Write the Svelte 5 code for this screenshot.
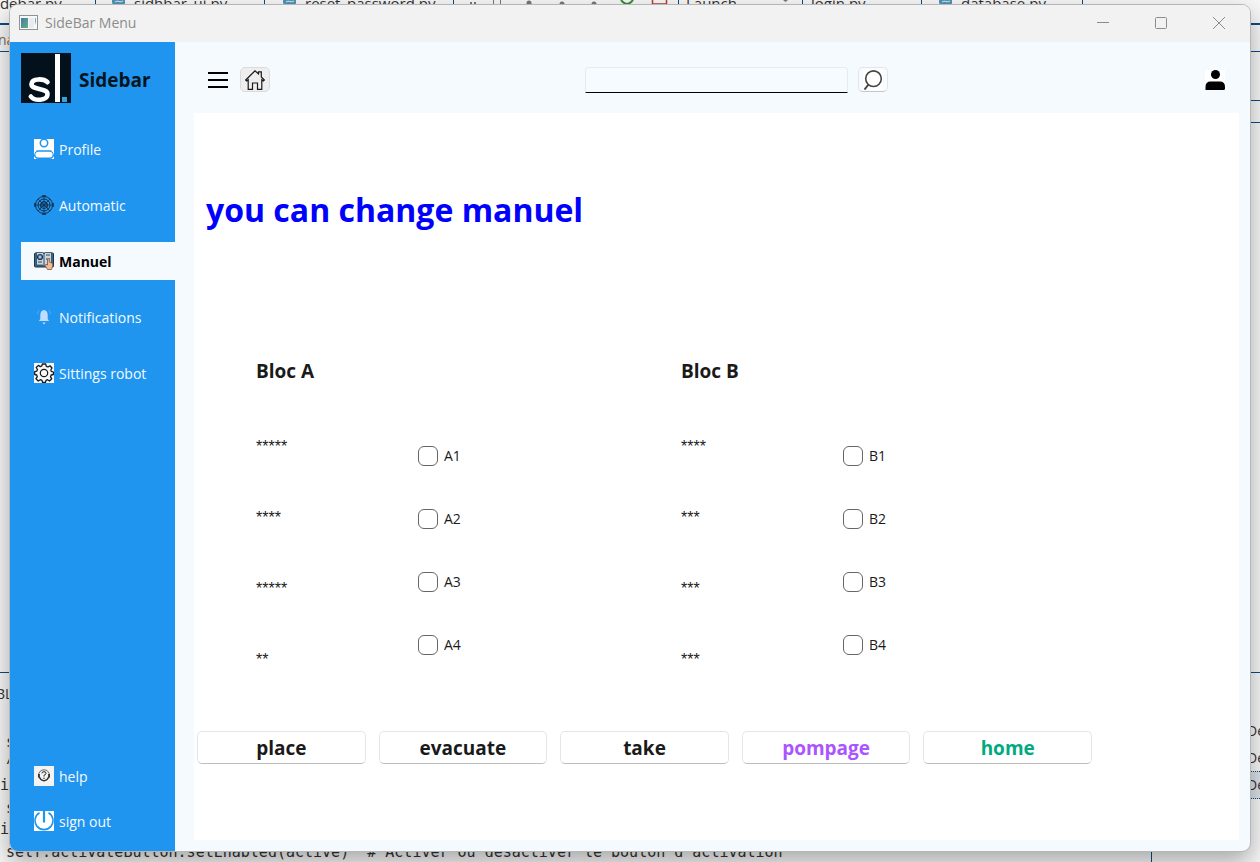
<script>
  const tabs = [
    { name: 'sidebar.py', x: -11, end: 95 },
    { name: 'sidhbar_ui.py', x: 134, end: 264, py: true },
    { name: 'reset_password.py', x: 305, end: 453, py: true },
    { name: 'Launch', x: 686, end: 678 },
    { name: 'login.py', x: 811, end: 802 },
    { name: 'database.py', x: 961, end: 1082, end2: 921, py: true }
  ];
  const rules = [
    { y: 23, thick: true },
    { y: 51 },
    { y: 672 }
  ];
  const code = [
    { text: 'na', x: -2, y: 31, ui: true, warm: true },
    { text: 'BL', x: -4, y: 685, ui: true },
    { text: 's', x: 6, y: 733 },
    { text: '/', x: 6, y: 749 },
    { text: '.il', x: -9, y: 776 },
    { text: 's', x: 6, y: 799 },
    { text: '.il', x: -9, y: 820 },
    { text: "self.activateButton.setEnabled(active)  # Activer ou désactiver le bouton d'activation", x: 6, y: 843 }
  ];
  const nav = [
    { id: 'profile', label: 'Profile' },
    { id: 'automatic', label: 'Automatic' },
    { id: 'manuel', label: 'Manuel' },
    { id: 'notifications', label: 'Notifications' },
    { id: 'settings', label: 'Sittings robot' }
  ];
  const footer = [
    { id: 'help', label: 'help' },
    { id: 'signout', label: 'sign out' }
  ];
  const blocs = [
    { name: 'Bloc A', values: ['*****', '****', '*****', '**'], checks: ['A1', 'A2', 'A3', 'A4'] },
    { name: 'Bloc B', values: ['****', '***', '***', '***'], checks: ['B1', 'B2', 'B3', 'B4'] }
  ];
  const actions = [
    { label: 'place' },
    { label: 'evacuate' },
    { label: 'take' },
    { label: 'pompage', tone: 'violet' },
    { label: 'home', tone: 'green' }
  ];
  let active = $state('manuel');
  let query = $state('');
</script>

{#snippet icon(id)}
  <svg class="icon" viewBox="0 0 20 20" aria-hidden="true">
    {#if id === 'profile'}
      <rect width="20" height="20" fill="#fff" />
      <circle cx="10" cy="4" r="3.700" fill="#fff" stroke="#2095f0" stroke-width="1.500" />
      <rect x="0.700" y="12" width="18.600" height="7.200" rx="3.500" fill="#fff" stroke="#2095f0" stroke-width="1.500" />
      <path d="M0 11.500H3Q0.500 12.500 0 16ZM20 11.500H17Q19.500 12.500 20 16Z" fill="#fff" />
    {:else if id === 'automatic'}
      <g fill="none" stroke="#12304d" stroke-width="1">
        <circle cx="10" cy="10" r="8.500" />
        <circle cx="10" cy="10" r="6" />
        <circle cx="10" cy="10" r="3.500" />
        <path d="M10 0V20M0 10H20M4 4L16 16M16 4L4 16" stroke-width="0.800" />
        <path d="M8 1H12M8 19H12M1 8V12M19 8V12" stroke-width="1.500" />
        <path d="M7 13V9L10 6L13 9V13" />
      </g>
      <circle cx="10" cy="10" r="1.500" fill="#12304d" />
    {:else if id === 'manuel'}
      <rect x="0.500" y="2" width="19" height="14" rx="1" fill="#33658d" stroke="#243447" />
      <path d="M2.500 1.500H8.500L10 3L11.500 1.500H17.500V14H11.500L10 15L8.500 14H2.500Z" fill="#c9d6e2" stroke="#34495c" stroke-width="0.800" />
      <path d="M10 3V14M4 11H8M12 8H16M12 4H16" stroke="#34495c" fill="none" />
      <circle cx="6" cy="6" r="2.500" fill="#5b9bd0" stroke="#243447" stroke-width="1.200" />
      <circle cx="6" cy="6" r="0.800" fill="#fff" />
      <path d="M13.500 8Q14.500 7 15.300 8V11L18 12Q19.300 12.500 18.700 15L17.500 18.500H13.500L11 14.500Q11.500 13 13.500 14Z" fill="#efbd94" stroke="#7c543d" stroke-width="0.800" />
    {:else if id === 'notifications'}
      <path d="M10 3Q6.500 3.500 6.300 8V12L5 14H15L13.700 12V8Q13.500 3.500 10 3Z" fill="#bfdcff" />
      <path d="M8.300 15.500H11.700L10 17.500Z" fill="#bfdcff" />
      <path d="M5 3Q3.500 4.500 3.500 7M15 3Q16.500 4.500 16.500 7" fill="none" stroke="#4eaaf5" />
    {:else if id === 'settings'}
      <rect width="20" height="20" fill="#f6f8fa" />
      <path d="M8.300 1H11.700L12.300 3.300L14 4L16 2.800L18 5L16.800 7L17.300 8.400L19.400 9V11.500L17.200 12L16.500 13.800L17.700 15.700L15.500 18L13.500 16.700L12 17.400L11.500 19.400H8.500L8 17.400L6.300 16.700L4.300 18L2 15.700L3.300 13.700L2.700 12L0.700 11.500V8.600L2.800 8.100L3.500 6.500L2.200 4.500L4.400 2.400L6.300 3.600L7.800 3Z" fill="none" stroke="#15191c" stroke-width="1.300" stroke-linejoin="round" />
      <circle cx="10" cy="10" r="3.700" fill="none" stroke="#15191c" stroke-width="1.200" />
    {:else if id === 'help'}
      <rect width="20" height="20" fill="#f3f3f3" />
      <circle cx="10" cy="9.300" r="5.500" fill="none" stroke="#666" stroke-width="1" />
      <path d="M5.500 11L7 13.500L10 14.800L13 13.500L14.500 11" fill="none" stroke="#333" stroke-width="1.200" />
      <path d="M8 7.300Q8 5.700 10 5.700Q12 5.700 12 7.300Q12 8.500 10 9.300V10.500" fill="none" stroke="#222" stroke-width="1" />
      <circle cx="10" cy="12.300" r="0.700" fill="#222" />
      <path d="M5 8V11.500M15 8V11.500" stroke="#222" stroke-width="1.600" />
    {:else if id === 'signout'}
      <rect width="20" height="20" fill="#fff" />
      <path d="M5.500 1.800A9 9 0 1 0 14.500 1.800" fill="none" stroke="#2095f0" stroke-width="1.600" />
      <path d="M10 0V11.500" stroke="#2095f0" stroke-width="2.200" />
    {/if}
  </svg>
{/snippet}

<div class="desktop">
  <div class="editor" aria-hidden="true">
    {#each tabs as tab}
      <span class="tab" style="left: {tab.x}px">{tab.name}</span>
      <i class="divider" style="left: {tab.end}px"></i>
      {#if tab.end2}<i class="divider" style="left: {tab.end2}px"></i>{/if}
      {#if tab.py}
        <svg class="py" viewBox="0 0 14 6" style="left: {tab.x - 22}px">
          <path d="M0 0H13V3Q13 5 10 5H3Q0 5 0 2Z" fill="#4f94b8" />
          <path d="M3 2Q5 0.500 7 1.500T11 1" fill="none" stroke="#dbe9f0" />
        </svg>
      {/if}
    {/each}
    <svg class="tools" viewBox="0 0 330 6">
      <g fill="#777">
        <path d="M50 2h2v2h-2zM54 2h2v2h-2zM73 0h1v4h-1zM80 0h1v4h-1z" />
        <circle cx="109" cy="3" r="2.500" /><circle cx="142" cy="4" r="2.500" /><circle cx="174" cy="4" r="2.500" />
        <path d="M363 0h5l-2.500 2z" />
      </g>
      <path d="M201 0Q207 8 213 0" fill="none" stroke="#388a34" stroke-width="2" />
      <path d="M232.500 0V4H246.500V0" fill="none" stroke="#b0412e" stroke-width="1.500" />
    </svg>
    {#each rules as rule}
      <i class="rule" class:thick={rule.thick} style="top: {rule.y}px"></i>
    {/each}
    <i class="rule side" style="top: 100px"></i>
    <i class="rule side" style="top: 122px"></i>
    {#each code as line}
      <span class="code" class:ui={line.ui} class:warm={line.warm} style="left: {line.x}px; top: {line.y}px">{line.text}</span>
    {/each}
    <div class="panel">
      <span>De</span><span>De</span><span class="picked">De</span>
    </div>
    <i class="gutter"></i>
  </div>

  <div class="window">
    <div class="titlebar">
      <svg width="19" height="15" viewBox="0 0 19 15" aria-hidden="true">
        <defs>
          <linearGradient id="scene" x1="0" y1="0" x2="1" y2="1">
            <stop offset="0" stop-color="#4478a8" /><stop offset="1" stop-color="#62b183" />
          </linearGradient>
        </defs>
        <rect x="0.500" y="0.500" width="18" height="14" fill="#f8f8f8" stroke="#929292" />
        <rect x="2" y="3" width="7" height="10" fill="url(#scene)" />
        <rect x="10" y="3" width="5" height="10" fill="#e9ecef" />
        <path d="M16 3h1v7l-1-3z" fill="#7ca7c4" />
      </svg>
      <span class="caption">SideBar Menu</span>
      <button class="chrome" aria-label="Minimize"><svg viewBox="0 0 14 14"><path d="M1 6.500H13" /></svg></button>
      <button class="chrome" aria-label="Maximize"><svg viewBox="0 0 14 14"><rect x="1.500" y="1.500" width="11" height="11" rx="1" /></svg></button>
      <button class="chrome" aria-label="Close"><svg viewBox="0 0 14 14"><path d="M1 1L13 13M13 1L1 13" /></svg></button>
    </div>

    <div class="body">
      <aside>
        <div class="brand">
          <svg width="50" height="50" viewBox="0 0 50 50" aria-hidden="true">
            <rect width="50" height="50" fill="#02111b" />
            <path d="M26.500 29.200C23 25.600 11 24.800 10.500 31C10.200 37.500 26.500 34.300 26.500 41C26.500 48.500 13 48 9.800 43.500" fill="none" stroke="#fff" stroke-width="4.600" stroke-linecap="round" />
            <rect x="34" y="1" width="5" height="48" fill="#fff" />
            <rect x="41" y="44" width="5" height="5" fill="#2fa5dc" />
          </svg>
          <strong>Sidebar</strong>
        </div>
        <nav>
          {#each nav as item}
            <button class="link" class:active={active === item.id} onclick={() => (active = item.id)}>
              {@render icon(item.id)}<span>{item.label}</span>
            </button>
          {/each}
        </nav>
        <div class="bottom">
          {#each footer as item}
            <button class="link">{@render icon(item.id)}<span>{item.label}</span></button>
          {/each}
        </div>
      </aside>

      <main>
        <header>
          <button class="bare" aria-label="Toggle menu">
            <svg width="20" height="20" viewBox="0 0 20 20"><path d="M0 3H20M0 10H20M0 17H20" stroke="#000" stroke-width="2" /></svg>
          </button>
          <button class="tool home" aria-label="Home">
            <svg width="20" height="20" viewBox="0 0 20 20" fill="none" stroke="#1a1a1a" stroke-width="1.200">
              <path d="M0.700 10L10 0.800L13.500 4V1.800H16.300V7L19.300 10L18.300 11L16.800 9.700V19.300H12.500V13H7.500V19.300H3.200V9.700L1.700 11Z" />
            </svg>
          </button>
          <div class="search">
            <input type="text" aria-label="Search" bind:value={query} />
            <button class="tool" aria-label="Run search">
              <svg width="20" height="20" viewBox="0 0 20 20">
                <rect width="20" height="20" fill="#fff" />
                <circle cx="10.500" cy="8.700" r="7.800" fill="none" stroke="#444" stroke-width="1.600" />
                <path d="M5.500 14.500L1.500 19.500" stroke="#444" stroke-width="2" />
              </svg>
            </button>
          </div>
          <button class="bare" aria-label="Account">
            <svg width="20" height="20" viewBox="0 0 20 20">
              <rect width="20" height="20" fill="#fff" />
              <circle cx="10.500" cy="4.500" r="4.500" />
              <path d="M0.500 20V17Q0.500 11.500 5.500 11.500H15Q20 11.500 20 17V18.500Q20 20 18.500 20Z" />
            </svg>
          </button>
        </header>

        <section class="page">
          <h1>you can change manuel</h1>
          <div class="blocs">
            {#each blocs as bloc}
              <div class="bloc">
                <h2>{bloc.name}</h2>
                <div class="values">
                  {#each bloc.values as value}<span>{value}</span>{/each}
                </div>
                <div class="checks">
                  {#each bloc.checks as check}
                    <label><input type="checkbox" />{check}</label>
                  {/each}
                </div>
              </div>
            {/each}
          </div>
          <div class="actions">
            {#each actions as action}
              <button class={action.tone}>{action.label}</button>
            {/each}
          </div>
        </section>
      </main>
    </div>
  </div>
</div>

<style>
  :global(body) {
    margin: 0;
  }
  .desktop {
    position: relative;
    box-sizing: border-box;
    min-height: 100vh;
    padding: 4px 9px 10px;
    display: flex;
    overflow: hidden;
    background: #f7f7f7;
    color: #1a1a1a;
    font: 14px/20px "Open Sans", "Noto Sans", sans-serif;
  }
  button {
    font: inherit;
    color: inherit;
    cursor: pointer;
  }

  /* editor behind the window */
  .editor {
    position: absolute;
    inset: 0;
    overflow: hidden;
    color: #333;
  }
  .editor > * {
    position: absolute;
    white-space: pre;
  }
  .tab {
    top: -7px;
    font-size: 15px;
  }
  .divider {
    top: 0;
    width: 1px;
    height: 6px;
    background: #0f4a85;
  }
  .py {
    top: 0;
    width: 14px;
    height: 6px;
  }
  .tools {
    left: 420px;
    top: 0;
    width: 330px;
    height: 6px;
    overflow: visible;
  }
  .rule {
    left: 0;
    right: 0;
    height: 1px;
    background: #0f4a85;
  }
  .rule.thick {
    height: 2px;
  }
  .rule.side {
    left: 50%;
  }
  .code {
    font: 15px/18px "DejaVu Sans Mono", monospace;
  }
  .code.ui {
    font: 14px/18px "Open Sans", sans-serif;
  }
  .code.warm {
    color: #8a6a4a;
  }
  .panel {
    right: 0;
    top: 717px;
    width: 13px;
    display: flex;
    flex-direction: column;
  }
  .panel span {
    line-height: 27px;
  }
  .panel .picked {
    border: dotted #0f4a85;
    border-width: 1px 0;
    line-height: 26px;
    background: #dbe1e8;
  }
  .gutter {
    right: 108px;
    bottom: 0;
    width: 1px;
    height: 12px;
    background: #0f4a85;
  }

  /* application window */
  .window {
    position: relative;
    flex: 1;
    display: flex;
    flex-direction: column;
    overflow: hidden;
    border: 1px solid #b4b6b8;
    border-radius: 9px;
    background: #f5faff;
    box-shadow: 0 10px 24px rgba(0, 0, 0, 0.32);
  }
  .titlebar {
    box-sizing: border-box;
    display: flex;
    align-items: center;
    height: 37px;
    padding: 0 2px 2px 9px;
    background: #f2f2f2;
    color: #8c8c8c;
  }
  .caption {
    flex: 1;
    padding-left: 7px;
  }
  .chrome {
    width: 58px;
    height: 35px;
    padding: 0;
    border: 0;
    background: none;
  }
  .chrome svg {
    display: block;
    width: 14px;
    height: 14px;
    margin: 0 auto;
    fill: none;
    stroke: #8c8c8c;
  }
  .body {
    flex: 1;
    display: flex;
  }
  aside {
    flex: none;
    box-sizing: border-box;
    width: 165px;
    padding: 11px 0 11px 11px;
    display: flex;
    flex-direction: column;
    background: #2095f0;
    color: #f5faff;
  }
  .brand {
    display: flex;
    align-items: center;
    gap: 8px;
    color: #061420;
    font-size: 19px;
  }
  .brand strong {
    padding-top: 3px;
  }
  nav {
    display: flex;
    flex-direction: column;
    gap: 18px;
    margin-top: 27px;
  }
  .bottom {
    display: flex;
    flex-direction: column;
    gap: 7px;
    margin-top: auto;
  }
  .link {
    display: flex;
    align-items: center;
    gap: 5px;
    height: 38px;
    padding: 0 0 0 13px;
    border: 0;
    background: none;
    white-space: nowrap;
  }
  .link span {
    padding-top: 1px;
  }
  .link.active {
    background: #f5faff;
    color: #000;
    font-weight: 700;
  }
  .icon {
    flex: none;
    width: 20px;
    height: 20px;
  }
  main {
    flex: 1;
    display: flex;
    flex-direction: column;
    padding: 0 11px 11px 19px;
  }
  header {
    display: flex;
    align-items: center;
    gap: 12px;
    height: 71px;
    padding: 4px 14px 0;
    box-sizing: border-box;
  }
  header svg {
    display: block;
  }
  .bare {
    padding: 0;
    border: 0;
    background: none;
  }
  .tool {
    box-sizing: border-box;
    width: 30px;
    height: 25px;
    padding: 2px 4px;
    border: 1px solid #e2e6ea;
    border-bottom-color: #c3c8cd;
    border-radius: 5px;
    background: #f9fcff;
  }
  .tool.home {
    border-color: #d8dadc;
    background: #eeeeee;
  }
  .search {
    flex: 1;
    display: flex;
    align-items: center;
    justify-content: center;
    gap: 10px;
    padding-right: 3px;
  }
  .search input {
    box-sizing: border-box;
    width: 263px;
    height: 26px;
    padding: 0 8px;
    border: 1px solid #e6ebf0;
    border-bottom: 1px solid #000;
    border-radius: 4px 4px 1px 1px;
    outline: 0;
    background: #f6fbff;
    font: inherit;
  }
  .page {
    flex: 1;
    display: flex;
    flex-direction: column;
    background: #fff;
  }
  h1 {
    margin: 74px 12px 0;
    color: #0000ff;
    font-size: 32px;
    line-height: 46px;
  }
  h2 {
    grid-column: 1 / -1;
    margin: 0;
    font-size: 19px;
    line-height: 26px;
  }
  .blocs {
    display: grid;
    grid-template-columns: 1fr 1fr;
    margin: 125px 133px 0 62px;
  }
  .bloc {
    display: grid;
    grid-template-columns: 161px 1fr;
    align-items: start;
  }
  .values {
    display: flex;
    flex-direction: column;
    gap: 51px;
    padding-top: 53px;
    font: 16px/20px "Liberation Sans", Arial, sans-serif;
  }
  .checks {
    display: flex;
    flex-direction: column;
    align-items: start;
    gap: 42px;
    padding-top: 61px;
  }
  label {
    display: flex;
    align-items: center;
    gap: 6px;
    height: 21px;
  }
  label input {
    appearance: none;
    box-sizing: border-box;
    width: 20px;
    height: 20px;
    margin: 0 0 0 1px;
    border: 1px solid #666;
    border-radius: 6px;
    background: #fff;
  }
  label input:checked {
    background: #2095f0;
  }
  .actions {
    display: grid;
    grid-template-columns: repeat(5, 1fr);
    gap: 13px;
    margin: 61px 147px 0 3px;
  }
  .actions button {
    height: 33px;
    padding: 0;
    border: 1px solid #e6e6e6;
    border-bottom-color: #bdbdbd;
    border-radius: 5px;
    background: #fff;
    font-size: 19px;
    font-weight: 700;
    line-height: 26px;
  }
  .actions .violet {
    color: #aa55ff;
  }
  .actions .green {
    color: #00aa7f;
  }
</style>
